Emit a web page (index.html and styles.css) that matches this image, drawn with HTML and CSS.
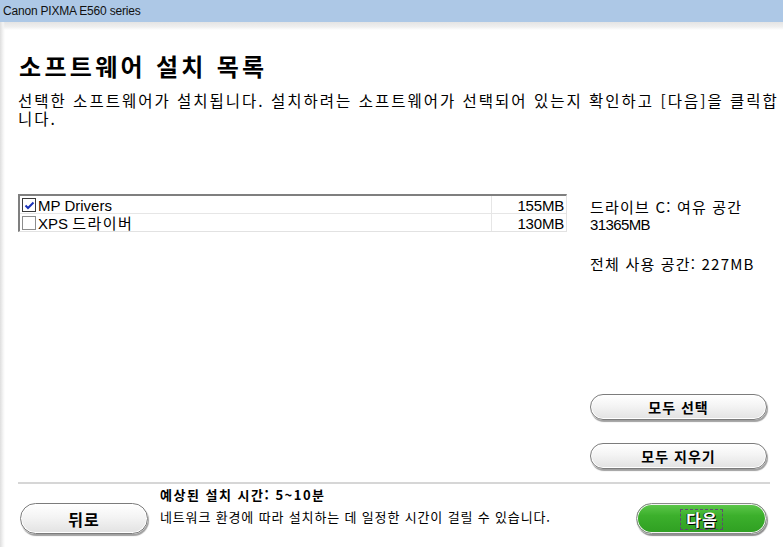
FILE: index.html
```html
<!DOCTYPE html>
<html lang="ko">
<head>
    <meta charset="UTF-8">
    <meta name="viewport" content="width=device-width, initial-scale=1.0">
    <title>Canon PIXMA E560 series</title>
    <link rel="stylesheet" href="styles.css">
</head>
<body>
    <div class="titlebar">Canon PIXMA E560 series</div>

    <div class="window">
        <h1 class="page-title">소프트웨어 설치 목록</h1>
        <p class="intro">선택한 소프트웨어가 설치됩니다. 설치하려는 소프트웨어가 선택되어 있는지 확인하고 [다음]을 클릭합<br>니다.</p>

        <div class="content">
            <div class="list">
                <div class="list-row">
                    <span class="check checked">
                        <svg width="11" height="11" viewBox="0 0 11 11"><path d="M1.5 5.5 L4 8 L9.5 2.5" fill="none" stroke="#1a32b8" stroke-width="2"/></svg>
                    </span>
                    <span class="list-name">MP Drivers</span>
                    <span class="list-size">155MB</span>
                </div>
                <div class="list-row">
                    <span class="check"></span>
                    <span class="list-name">XPS <span class="ko">드라이버</span></span>
                    <span class="list-size">130MB</span>
                </div>
            </div>

            <div class="side">
                <div class="disk-info">
                    <div class="ko">드라이브 C: 여유 공간</div>
                    <div class="num">31365MB</div>
                </div>
                <div class="disk-total ko">전체 사용 공간: 227MB</div>

                <div class="side-buttons">
                    <button class="pill">모두 선택</button>
                    <button class="pill">모두 지우기</button>
                </div>
            </div>
        </div>

        <div class="footer">
            <button class="pill big">뒤로</button>
            <div class="footer-text">
                <div class="est">예상된 설치 시간: 5~10분</div>
                <div>네트워크 환경에 따라 설치하는 데 일정한 시간이 걸릴 수 있습니다.</div>
            </div>
            <button class="pill big green"><span class="focus">다음</span></button>
        </div>
    </div>
</body>
</html>
```

FILE: styles.css
```css
html, body {
    margin: 0;
    height: 100%;
    overflow: hidden;
}

body {
    font-family: "Noto Sans CJK KR", "Liberation Sans", sans-serif;
    background-color: #ffffff;
    color: #000;
    width: 783px;
    height: 547px;
}

.titlebar {
    height: 22px;
    line-height: 22px;
    padding-left: 3px;
    font-family: "Liberation Sans", sans-serif;
    font-size: 12px;
    letter-spacing: -0.2px;
    background-color: #adc8e6;
    color: #111;
}

.window {
    height: 525px;
    box-sizing: border-box;
    padding: 0 13px 0 18px;
    background: linear-gradient(to right, #dedede 0, #f4f4f4 3px, rgba(255,255,255,0) 5px),
                linear-gradient(#e4e4e4 0, #f0f0f0 5px, #ffffff 8px);
    display: flex;
    flex-direction: column;
}

.page-title {
    margin: 29px 0 0 1px;
    font-size: 24px;
    line-height: 30px;
    font-weight: bold;
    letter-spacing: 3.3px;
}

.intro {
    margin: 10px 0 0 0;
    font-size: 15.5px;
    line-height: 18px;
    letter-spacing: 2px;
    white-space: nowrap;
}

.content {
    margin-top: 67px;
    height: 280px;
    display: flex;
    gap: 23px;
}

.list {
    width: 549px;
    height: 38px;
    box-sizing: border-box;
    border-top: 2px solid #7f7f7f;
    border-left: 2px solid #7f7f7f;
    border-right: 1px solid #e2e2e2;
    border-bottom: 1px solid #e2e2e2;
    font-family: "Liberation Sans", "Noto Sans CJK KR", sans-serif;
    font-size: 15px;
}

.list-row {
    display: flex;
    align-items: center;
    height: 17px;
    border-bottom: 1px solid #e6e6e6;
}

.list-row:last-child {
    border-bottom: none;
}

.check {
    width: 12px;
    height: 12px;
    margin: 1px 2px 0 2px;
    border: 1px solid #8c8c8c;
    background: #fff;
    display: flex;
    align-items: center;
    justify-content: center;
}

.check.checked {
    border-color: #3a3a3a;
}

.list-name {
    flex: 1;
    line-height: 17px;
    padding-top: 2px;
}

.list-name .ko {
    letter-spacing: 1.5px;
}

.list-size {
    width: 72px;
    text-align: right;
    padding: 2px 2px 0 0;
    border-left: 1px solid #e6e6e6;
    line-height: 15px;
    letter-spacing: -0.2px;
}

.side {
    flex: 1;
    display: flex;
    flex-direction: column;
    font-size: 15px;
    line-height: 18px;
}

.side .ko {
    letter-spacing: 1.2px;
}

.side .num {
    font-family: "Liberation Sans", sans-serif;
    letter-spacing: -0.6px;
}

.disk-info {
    margin-top: 4px;
}

.disk-total {
    margin-top: 21px;
}

.side-buttons {
    margin-top: auto;
    display: flex;
    flex-direction: column;
    gap: 23px;
    padding-bottom: 5px;
}

.pill {
    height: 26px;
    width: 177px;
    border-radius: 13px;
    border: 1px solid #7c7c7c;
    background: linear-gradient(#ffffff, #f4f4f4 45%, #e2e2e2);
    box-shadow: inset 0 0 0 1px #ffffff, 1px 2px 1px #a0a0a0;
    font-family: "Noto Sans CJK KR", sans-serif;
    font-size: 14px;
    font-weight: bold;
    letter-spacing: 1px;
    color: #000;
    padding: 0;
    cursor: pointer;
}

.footer {
    margin-top: 8px;
    border-top: 2px solid #d6d6d6;
    display: flex;
    align-items: flex-start;
    padding: 1px 3px 0 2px;
}

.pill.big {
    height: 31px;
    width: 128px;
    border-radius: 16px;
    margin-top: 18px;
    font-size: 16px;
}

.footer-text {
    flex: 1;
    padding-left: 12px;
    font-size: 13px;
    line-height: 20px;
    letter-spacing: 0.85px;
}

.est {
    font-weight: bold;
    letter-spacing: 1.5px;
    margin-bottom: 2px;
}

.pill.green {
    width: 131px;
    border-color: #8a8a8a;
    background: linear-gradient(#5ec84c, #3cb02c 40%, #2f9f22);
    box-shadow: inset 0 0 0 1px #f4f4f4, 1px 2px 1px #909090;
    color: #fff;
    text-shadow: 1px 1px 0 #000, -1px 0 0 #1a4a12;
}

.focus {
    display: inline-block;
    padding: 0 4px 0 5px;
    line-height: 19px;
    outline: 1px dashed #5d4a70;
}
```
